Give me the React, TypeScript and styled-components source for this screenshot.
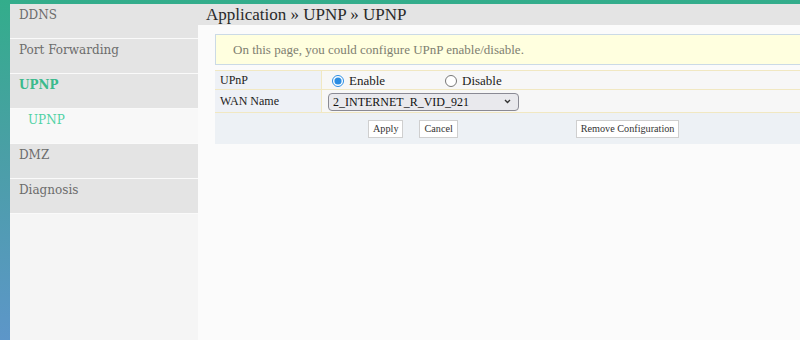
import React, { useState } from 'react'
import styled, { createGlobalStyle } from 'styled-components'

const GlobalStyle = createGlobalStyle`
    html, body {
        margin: 0;
        padding: 0;
    }
    body {
        height: 340px;
        overflow: hidden;
        background: linear-gradient(to bottom, #33ad8b 0%, #4a9fa6 45%, #5d96c9 100%);
        font-family: "Liberation Serif", serif;
    }
`

const menu = [
    { label: 'DDNS' },
    { label: 'Port Forwarding' },
    { label: 'UPNP', active: true },
    { label: 'UPNP', sub: true },
    { label: 'DMZ' },
    { label: 'Diagnosis' },
]

const App = () => {
    const [enabled, setEnabled] = useState<boolean>(true)

    return (
        <>
            <GlobalStyle />
            <Frame>
                <Sidebar>
                    {menu.map((item, i) => (
                        <NavItem key={i} $active={item.active} $sub={item.sub}>
                            {item.label}
                        </NavItem>
                    ))}
                </Sidebar>
                <Main>
                    <TitleBar>Application » UPNP » UPNP</TitleBar>
                    <Content>
                        <Notice>On this page, you could configure UPnP enable/disable.</Notice>
                        <FormTable>
                            <Row>
                                <Label>UPnP</Label>
                                <Value>
                                    <RadioLabel $width={113}>
                                        <input type="radio" name="upnp" checked={enabled} onChange={() => setEnabled(true)} />
                                        Enable
                                    </RadioLabel>
                                    <RadioLabel>
                                        <input type="radio" name="upnp" checked={!enabled} onChange={() => setEnabled(false)} />
                                        Disable
                                    </RadioLabel>
                                </Value>
                            </Row>
                            <Row $tall>
                                <Label>WAN Name</Label>
                                <Value>
                                    <Select defaultValue="2_INTERNET_R_VID_921">
                                        <option>2_INTERNET_R_VID_921</option>
                                    </Select>
                                </Value>
                            </Row>
                            <ButtonRow>
                                <Button>Apply</Button>
                                <Button $gap={16}>Cancel</Button>
                                <Button $gap={118}>Remove Configuration</Button>
                            </ButtonRow>
                        </FormTable>
                    </Content>
                </Main>
            </Frame>
        </>
    )
}

const Frame = styled.div`
    display: flex;
    height: 336px;
    margin: 4px 0 0 10px;
    box-shadow: inset 0 1px 0 rgba(255, 255, 255, 0.45);
`

const Sidebar = styled.nav`
    width: 188px;
    flex-shrink: 0;
    background: #f5f5f5;
    display: flex;
    flex-direction: column;
`

const NavItem = styled.div<{ $active?: boolean; $sub?: boolean }>`
    height: 31px;
    padding: 3px 0 0 ${p => (p.$sub ? 18 : 9)}px;
    border-bottom: 1px solid #fafafa;
    background: ${p => (p.$sub ? '#f8f8f8' : '#e4e4e4')};
    color: ${p => (p.$sub ? '#4fd2a4' : p.$active ? '#3bba8c' : '#6c6c6c')};
    font-family: "DejaVu Serif", serif;
    font-size: 12px;
    font-weight: ${p => (p.$active ? 'bold' : 'normal')};
    line-height: 16px;
`

const Main = styled.main`
    flex: 1;
    background: #fbfbfb;
    overflow: hidden;
`

const TitleBar = styled.h1`
    margin: 0;
    height: 21px;
    padding-left: 8px;
    background: #e4e4e4;
    color: #2a2a2a;
    font-family: "Liberation Serif", serif;
    font-size: 17px;
    font-weight: normal;
    line-height: 21px;
    white-space: nowrap;
`

const Content = styled.div`
    padding: 9px 0 0 17px;
`

const Notice = styled.div`
    width: 640px;
    height: 29px;
    padding-left: 17px;
    border: 1px solid #cbdae6;
    background: #ffffdf;
    color: #7e7e70;
    font-size: 13px;
    line-height: 29px;
    white-space: nowrap;
`

const FormTable = styled.div`
    margin-top: 5px;
    width: 660px;
    border-top: 1px solid #f1e8c2;
`

const Row = styled.div<{ $tall?: boolean }>`
    display: grid;
    grid-template-columns: 107px 1fr;
    height: ${p => (p.$tall ? 22 : 18)}px;
    border-bottom: 1px solid #f1e8c2;
`

const Label = styled.div`
    display: flex;
    align-items: center;
    padding: 1px 0 0 5px;
    background: #eef1f6;
    border-right: 1px solid #f1e8c2;
    color: #222;
    font-size: 12px;
`

const Value = styled.div`
    display: flex;
    align-items: center;
    padding: 1px 0 0 6px;
    background: #f7f7f7;
`

const RadioLabel = styled.label<{ $width?: number }>`
    display: flex;
    align-items: center;
    width: ${p => (p.$width ? p.$width + 'px' : 'auto')};
    color: #222;
    font-size: 13px;

    input {
        margin: 0 5px 0 4px;
        width: 12px;
        height: 12px;
        accent-color: #2b8de3;
    }
`

const Select = styled.select`
    appearance: none;
    width: 191px;
    height: 18px;
    padding: 0 0 0 4px;
    border: 1px solid #8a8a94;
    border-radius: 4px;
    background: #e9e9ed url("data:image/svg+xml;utf8,<svg xmlns='http://www.w3.org/2000/svg' width='7' height='5' viewBox='0 0 7 5'><path d='M1 1l2.5 2.5L6 1' fill='none' stroke='%23333' stroke-width='1.4'/></svg>") no-repeat right 7px center;
    color: #111;
    font-family: "Liberation Serif", serif;
    font-size: 12px;
    line-height: 16px;
`

const ButtonRow = styled.div`
    display: flex;
    align-items: center;
    height: 31px;
    padding-left: 153px;
    background: #edf1f5;
`

const Button = styled.button<{ $gap?: number }>`
    margin-left: ${p => p.$gap ?? 0}px;
    height: 18px;
    padding: 0 4px;
    border: 1px solid #cfcfcf;
    border-radius: 0;
    background: #fff;
    color: #333;
    font-family: "Liberation Serif", serif;
    font-size: 10.2px;
`

export default App
